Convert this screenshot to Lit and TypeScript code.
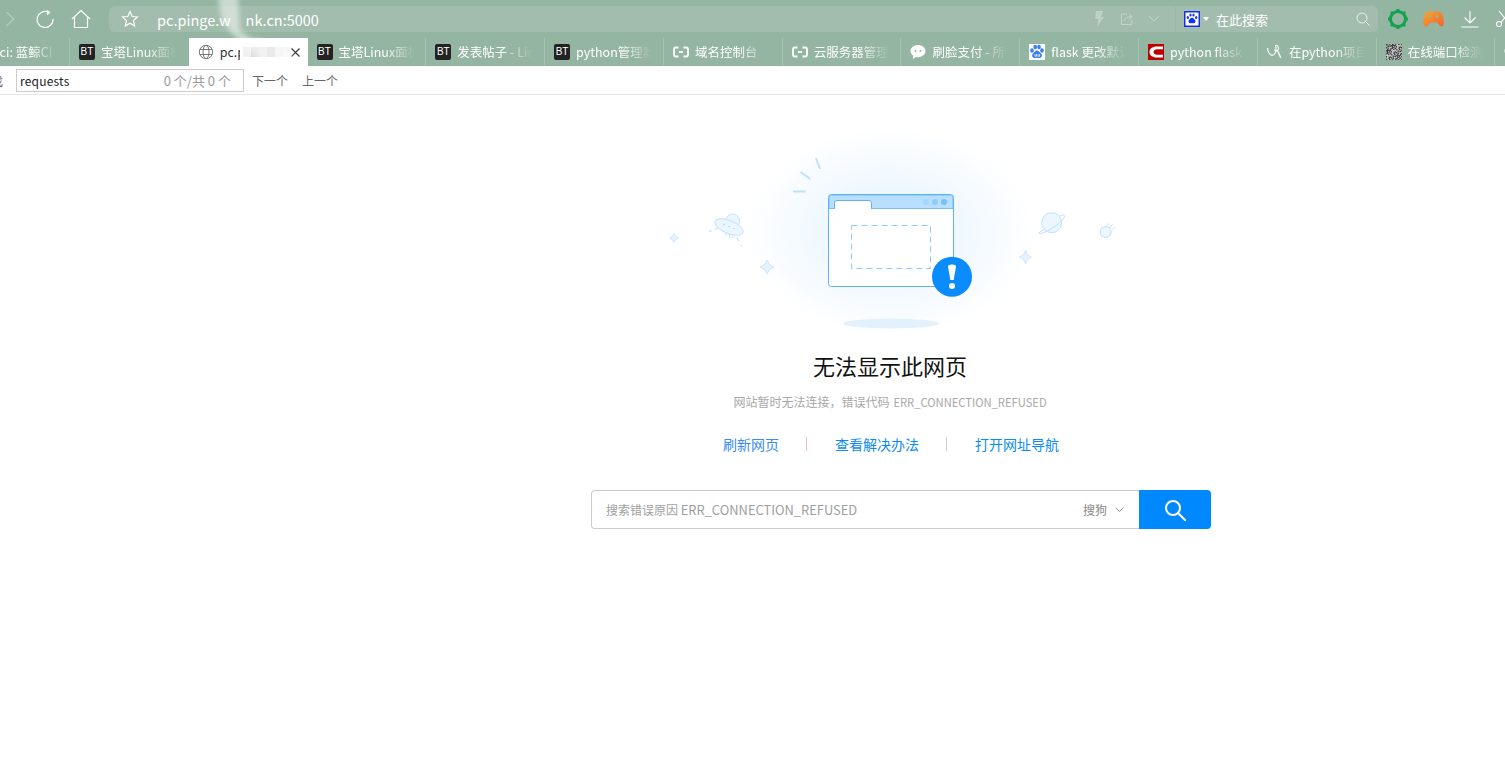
import { LitElement, html, css, svg } from "lit";
import { customElement } from "lit/decorators.js";

const bt = html`<span class="bt">BT</span>`;
const aliyun = html`<svg class="ti" viewBox="0 0 16 16" fill="none" stroke="#fff" stroke-width="1.8"><path d="M5.5 3.5H3Q1 3.5 1 5.5V10.5Q1 12.5 3 12.5H5.5"/><path d="M10.5 3.5H13Q15 3.5 15 5.5V10.5Q15 12.5 13 12.5H10.5"/><path d="M6 8H10"/></svg>`;
const wechat = html`<svg class="ti" viewBox="0 0 16 16"><path fill="#fff" d="M8 1C3.8 1 .5 3.7.5 7c0 1.9 1.1 3.6 2.8 4.7L2.7 15l3.2-2c.7.1 1.4.2 2.1.2 4.2 0 7.5-2.7 7.5-6.1S12.200 1 8 1z"/><circle cx="5.500" cy="7" r="1" fill="#94b5a2"/><circle cx="10.500" cy="7" r="1" fill="#94b5a2"/></svg>`;
const baiduTab = html`<svg class="ti" viewBox="0 0 16 16"><rect width="16" height="16" fill="#fff"/><g fill="#3a7ff0"><ellipse cx="3" cy="6.500" rx="1.800" ry="2.200"/><ellipse cx="6.200" cy="3" rx="1.800" ry="2.300"/><ellipse cx="10" cy="3" rx="1.800" ry="2.300"/><ellipse cx="13" cy="6.500" rx="1.800" ry="2.200"/><path d="M8 6.500c-2 0-2.500 2-4 3-1.500 1.200-1 4.500 1.500 4.500 1 0 1.600-.3 2.500-.3s1.500.3 2.500.3c2.500 0 3-3.300 1.500-4.500-1.500-1-2-3-4-3z"/></g><path d="M6 10v2.300h1.500V10M9 10v2.300h1.500V10" fill="none" stroke="#fff" stroke-width=".7"/></svg>`;
const csdn = html`<svg class="ti" viewBox="0 0 16 16"><rect width="16" height="16" fill="#c00000"/><path fill="#fff" d="M15 2.500H8.500C4.500 2.500 1.500 4.800 1.500 8s3 5.500 7 5.500H15V10.800H9C7 10.800 5.500 9.700 5.500 8S7 5.200 9 5.200H15z"/></svg>`;
const script = html`<svg class="ti" viewBox="0 0 16 16" fill="none" stroke="#fff" stroke-width="1.100"><path d="M.5 4C1 8 3 11.500 5.300 11.300 7.500 11 9 8 9 5 9 2.500 8 1.500 8.700 1.300 10.500 1 12 3 11 6 10 8 8 7 7.500 5.500"/><path d="M10.500 6.500L13.700 13.700" stroke-width="1.400"/></svg>`;
const qrRects: unknown[] = [];
for (let y = 0; y < 16; y++) {
  for (let x = 0; x < 16; x++) {
    const v = (x * 7 + y * 13 + ((x * y) % 5) * 11) % 6;
    const c = ["#3c3c3c", "#777", "#a9a9a9", "#555", "#8e8e8e", "#c4c4c4"][v];
    qrRects.push(svg`<rect x=${x} y=${y} width="1" height="1" fill=${c}></rect>`);
  }
}
const qr = html`<svg class="ti" viewBox="0 0 16 16" shape-rendering="crispEdges">${qrRects}</svg>`;
const globe = html`<svg class="ti" viewBox="0 0 16 16" fill="none" stroke="#777" stroke-width="1"><circle cx="8" cy="8" r="6.700"/><ellipse cx="8" cy="8" rx="3" ry="6.700"/><path d="M1.800 5.500H14.200M1.800 10.500H14.200"/></svg>`;

interface Tab { icon: unknown; text: string; active?: boolean; cut?: boolean }
const tabs: Tab[] = [
  { icon: null, text: "ci: 蓝鲸CI", cut: true },
  { icon: bt, text: "宝塔Linux面板" },
  { icon: globe, text: "pc.p", active: true },
  { icon: bt, text: "宝塔Linux面板" },
  { icon: bt, text: "发表帖子 - Linux" },
  { icon: bt, text: "python管理器" },
  { icon: aliyun, text: "域名控制台" },
  { icon: aliyun, text: "云服务器管理" },
  { icon: wechat, text: "刷脸支付 - 所有" },
  { icon: baiduTab, text: "flask 更改默认" },
  { icon: csdn, text: "python flask" },
  { icon: script, text: "在python项目" },
  { icon: qr, text: "在线端口检测" },
  { icon: wechat, text: "" },
];

@customElement("app-root")
export class AppRoot extends LitElement {
  static styles = css`
    :host { display: block; height: 767px; overflow: hidden; position: relative; background: #fff;
      font-family: "Noto Sans CJK SC", "Open Sans", sans-serif; }
    .toolbar { height: 38px; background: #94b5a2; display: flex; align-items: center; }
    .nav { flex: 0 0 109px; display: flex; align-items: center; }
    .fwd { margin-left: 5px; width: 10px; height: 16px; }
    .reload { margin-left: 20px; width: 20px; height: 20px; }
    .home { margin-left: 16px; width: 20px; height: 20px; }
    .addr { width: 1269px; height: 26px; border-radius: 6px; background: #a2bdad; display: flex; align-items: center; color: #fff; }
    .star { margin-left: 12px; width: 18px; height: 18px; flex: none; }
    .url { margin-left: 18px; font-size: 14.500px; display: flex; white-space: nowrap; }
    .urlgap { width: 15px; }
    .spring { flex: 1; }
    .dim { flex: none; }
    .bolt { width: 10px; height: 16px; margin-right: 16px; }
    .share { width: 14px; height: 14px; margin-right: 14px; }
    .chev { width: 12px; height: 8px; margin-right: 15px; }
    .sep { width: 1px; height: 26px; background: #9db8a8; flex: none; }
    .paw { margin-left: 8px; width: 16px; height: 16px; flex: none; }
    .tri { margin-left: 3px; width: 6px; height: 4px; flex: none; }
    .hint { margin-left: 7px; font-size: 13px; width: 140px; flex: none; }
    .mag { width: 14px; height: 14px; flex: none; margin-right: 8px; }
    .tools { flex: 1; display: flex; align-items: center; min-width: 0; }
    .gear { margin-left: 9px; width: 22px; height: 22px; flex: none; }
    .pad { margin-left: 14px; width: 21px; height: 16px; flex: none; }
    .dl { margin-left: 17px; width: 18px; height: 18px; flex: none; }
    .cut { margin-left: 17px; width: 18px; height: 18px; flex: none; }

    .tabs { height: 28px; background: #94b5a2; display: flex; margin-left: -48.900px; width: 1660px; }
    .tab { flex: 0 0 118.800px; box-sizing: border-box; height: 28px; display: flex; align-items: center; padding-left: 9px;
      border-right: 1px solid #a6c2b2; color: #fff; font-size: 12.500px; overflow: hidden; }
    .tab.cutoff { padding-left: 48.500px; }
    .tab.active { background: #fff; color: #333; border-right: none; }
    .tab.before-active { border-right: none; }
    .label { margin-left: 6px; width: 76px; padding-bottom: 2px; white-space: nowrap; overflow: hidden;
      -webkit-mask-image: linear-gradient(90deg, #000 58%, transparent 100%); mask-image: linear-gradient(90deg, #000 58%, transparent 100%); }
    .active .label { -webkit-mask-image: none; mask-image: none; width: auto; }
    .cutoff .label { margin-left: 0; width: 56px; }
    .ti { width: 16px; height: 16px; flex: none; }
    .bt { width: 16px; height: 16px; flex: none; background: #222; border-radius: 2px; color: #fff; font: 10px/16px "Liberation Sans", sans-serif; text-align: center; }
    .mosaic { display: flex; margin-left: 3px; height: 10px; }
    .mosaic i { display: block; width: 8px; height: 10px; }
    .close { margin-left: auto; margin-right: 8px; width: 9px; height: 9px; flex: none; }

    .find { box-sizing: border-box; display: flex; align-items: center; border-bottom: 1px solid #e6e6e6; font-size: 12px; background: #fff; height: 29px; }
    .findlabel { margin-left: -9px; margin-right: 13px; width: 12px; color: #666; white-space: nowrap; overflow: hidden; flex: none; }
    .box { width: 228px; height: 23px; box-sizing: border-box; border: 1px solid #ccc; display: flex; align-items: center; padding: 0 12px 0 3px; justify-content: space-between; color: #222; letter-spacing: .2px; }
    .count { color: #999; font-size: 13px; letter-spacing: 0; }
    .fbtn { color: #666; margin-left: 8px; }
    .fbtn + .fbtn { margin-left: 14px; }

    main { width: 620px; margin-left: 580px; padding-top: 35px; display: flex; flex-direction: column; align-items: center; }
    .art { width: 460px; height: 210px; display: block; flex: none; }
    h1 { margin: 10px 0 0; font-size: 22px; line-height: 30px; font-weight: 400; color: #111; }
    .sub { margin-top: 13px; font-size: 12px; line-height: 18px; color: #a8a8a8; white-space: nowrap; }
    .sub span { font-size: 11.200px; margin-left: 4px; }
    .links { margin-top: 23px; padding-left: 2px; display: flex; align-items: center; font-size: 14px; line-height: 20px; color: #0a8cf0; white-space: nowrap; }
    .links .first { color: #3a8bf2; }
    .links i { display: block; width: 1px; height: 14px; margin: 0 28px 0 27px; background: #c8d0e8; }
    .links i.pink { background: #f0b8c8; }
    .search { margin-top: 36px; margin-left: 22px; width: 620px; height: 39px; flex: none; display: flex; }
    .field { flex: 1; box-sizing: border-box; border: 1px solid #ccc; border-right: none; border-radius: 4px 0 0 4px; display: flex; align-items: center; padding-left: 14px; font-size: 12px; color: #a0a0a0; }
    .field .en { font-size: 12.900px; }
    .engine { margin-left: auto; color: #888; }
    .echev { width: 9px; height: 6px; margin: 0 15px 0 8px; flex: none; }
    .go { flex: 0 0 72px; background: #0088ff; border-radius: 0 4px 4px 0; display: flex; align-items: center; justify-content: center; }
    .go svg { width: 22px; height: 22px; }

    .smudge { position: absolute; left: 200px; top: 0; width: 110px; height: 66px; pointer-events: none; }
  `;

  render() {
    return html`
      <div class="toolbar">
        <div class="nav">
          <svg class="fwd" viewBox="0 0 10 16" fill="none" stroke="#fff" stroke-opacity=".3" stroke-width="1.200"><path d="M1 1l8 7-8 7"/></svg>
          <svg class="reload" viewBox="0 0 20 20" fill="none" stroke="#fff" stroke-width="1.200"><path d="M13.500 3.300A8 8 0 1 0 18 10"/><path d="M11.500 .8l4 2.500-3.200 3" fill="#fff" stroke="none"/></svg>
          <svg class="home" viewBox="0 0 20 20" fill="none" stroke="#fff" stroke-width="1.200"><path d="M1 10L10 1.500 19 10"/><path d="M3.500 8.500V18.500H16.500V8.500"/></svg>
        </div>
        <div class="addr">
          <svg class="star" viewBox="0 0 18 18" fill="none" stroke="#fff" stroke-width="1.200"><path d="M9 1.500l2.200 5 5.300.5-4 3.600 1.200 5.400L9 13.200l-4.700 2.800 1.200-5.400-4-3.600 5.300-.5z"/></svg>
          <div class="url"><span>pc.pinge.w</span><span class="urlgap"></span><span>nk.cn:5000</span></div>
          <div class="spring"></div>
          <svg class="dim bolt" viewBox="0 0 10 16"><path fill="#fff" fill-opacity=".3" d="M2 0H9L7 6H10L3 16 4.500 8H1z"/></svg>
          <svg class="dim share" viewBox="0 0 14 14" fill="none" stroke="#fff" stroke-opacity=".35" stroke-width="1"><path d="M7 2H1.500V12.500H12V8"/><path d="M4.500 9C5 6 7.500 4.500 11 4.500M9 2l3 2.500L9 7"/></svg>
          <svg class="dim chev" viewBox="0 0 12 8" fill="none" stroke="#fff" stroke-opacity=".35" stroke-width="1"><path d="M1 1l5 5 5-5"/></svg>
          <div class="sep"></div>
          <svg class="paw" viewBox="0 0 16 16"><rect x=".75" y=".75" width="14.500" height="14.500" fill="#fff" stroke="#1230f0" stroke-width="1.500"/><g fill="#1230f0"><ellipse cx="3.800" cy="6.500" rx="1.100" ry="1.500"/><ellipse cx="6.500" cy="4" rx="1.100" ry="1.500"/><ellipse cx="9.500" cy="4" rx="1.100" ry="1.500"/><ellipse cx="12.200" cy="6.500" rx="1.100" ry="1.500"/><path d="M8 6.800c-1.500 0-2 1.500-3 2.300-1 1-.6 3.200 1.200 3.200.7 0 1.100-.3 1.800-.3s1.100.3 1.800.3c1.800 0 2.200-2.200 1.200-3.200-1-.8-1.500-2.300-3-2.300z"/></g></svg>
          <svg class="tri" viewBox="0 0 6 4"><path fill="#fff" d="M0 0H6L3 4z"/></svg>
          <span class="hint">在此搜索</span>
          <svg class="mag" viewBox="0 0 14 14" fill="none" stroke="#fff" stroke-opacity=".75" stroke-width="1"><circle cx="6" cy="6" r="5"/><path d="M9.700 9.700L13.500 13.500"/></svg>
        </div>
        <div class="tools">
          <svg class="gear" viewBox="0 0 22 22" fill="none"><circle cx="11" cy="11" r="7.500" stroke="#14a24e" stroke-width="3"/><g fill="#14a24e"><rect x="9.500" y="1" width="3" height="3"/><rect x="9.500" y="18" width="3" height="3"/><rect x="1" y="9.500" width="3" height="3"/><rect x="18" y="9.500" width="3" height="3"/><rect x="3.500" y="3.500" width="3" height="3"/><rect x="15.500" y="3.500" width="3" height="3"/><rect x="3.500" y="15.500" width="3" height="3"/><rect x="15.500" y="15.500" width="3" height="3"/></g></svg>
          <svg class="pad" viewBox="0 0 21 16"><defs><linearGradient id="pg" x1="0" x2="1" y1="0" y2="1"><stop offset="0" stop-color="#f9a62b"/><stop offset="1" stop-color="#f1632e"/></linearGradient></defs><path fill="url(#pg)" d="M6 0.500H15C18.500 .5 20.500 5 20.800 11c.1 3-1 4.500-2.500 4.500-1.800 0-3-3.500-5-4H8.200c-2 .5-3.200 4-5 4C1.700 15.500.2 14 .2 11 .5 5 2.500.5 6 .5z"/><circle cx="7" cy="5.500" r="1.400" fill="#94b5a2"/><circle cx="14" cy="5.500" r="1.400" fill="#94b5a2"/></svg>
          <svg class="dl" viewBox="0 0 18 18" fill="none" stroke="#fff" stroke-width="1.100"><path d="M9 1V13M3.500 7.500L9 13l5.500-5.500M.5 17H17.500"/></svg>
          <svg class="cut" viewBox="0 0 18 18" fill="none" stroke="#fff" stroke-width="1.100"><circle cx="3" cy="14" r="2.500"/><path d="M5 12.500L14 1M3 1l9 11"/></svg>
        </div>
      </div>
      <div class="tabs">
        ${tabs.map((t, i) => html`
          <div class="tab ${t.active ? "active" : ""} ${t.cut ? "cutoff" : ""} ${tabs[i + 1]?.active ? "before-active" : ""}">
            ${t.icon}
            <span class="label">${t.text}</span>
            ${t.active ? html`
              <div class="mosaic"><i style="background:#f1f1f1"></i><i style="background:#dcdcdc"></i><i style="background:#e3e3e3"></i><i style="background:#d4d4d4"></i><i style="background:#ececec"></i><i style="background:#f4f4f4"></i></div>
              <svg class="close" viewBox="0 0 9 9" stroke="#333" stroke-width="1.100"><path d="M.5.500l8 8M8.500.500l-8 8"/></svg>` : ""}
          </div>`)}
      </div>
      <div class="find">
        <span class="findlabel">找</span>
        <div class="box"><span>requests</span><span class="count">0 个/共 0 个</span></div>
        <span class="fbtn">下一个</span>
        <span class="fbtn">上一个</span>
      </div>
      <main>
        <svg class="art" viewBox="660 130 460 210">
          <defs>
            <radialGradient id="glow"><stop offset="0" stop-color="#dff0ff"/><stop offset=".5" stop-color="#f0f8ff"/><stop offset="1" stop-color="#fff"/></radialGradient>
          </defs>
          <ellipse cx="890" cy="232" rx="145" ry="104" fill="url(#glow)"/>
          <ellipse cx="891" cy="323.500" rx="48" ry="5" fill="#e3f1fd"/>
          <g stroke="#bde0fd" stroke-width="2" fill="none"><path d="M816 158L820 169"/><path d="M800.700 172L810.300 179"/><path d="M793 191.500H805.700"/></g>
          <rect x="828.500" y="194.500" width="125" height="92" rx="3" fill="#fff" stroke="#5cb4ff"/>
          <path d="M829 208.500V197.500Q829 195 831.500 195H950.500Q953 195 953 197.500V208.500Z" fill="#b8dfff" stroke="#5cb4ff" stroke-width=".8"/>
          <path d="M834.500 208.500V203Q834.500 200.500 837 200.500H869Q871.500 200.500 871.500 203V208.500Z" fill="#fff" stroke="#5cb4ff"/>
          <path d="M835 208.500H871" stroke="#fff" stroke-width="1.200"/>
          <circle cx="926" cy="202" r="3" fill="#a5d6ff"/><circle cx="935" cy="202" r="3" fill="#8ccbff"/><circle cx="944" cy="202" r="3" fill="#75c0ff"/>
          <rect x="851.500" y="225.500" width="79" height="43" fill="none" stroke="#8ccbff" stroke-dasharray="6 4"/>
          <circle cx="952" cy="276.700" r="20" fill="#0a8cff"/>
          <path d="M948 266.500Q948 264.500 952 264.500T956 266.500L953.700 280H950.300Z" fill="#fff"/>
          <circle cx="952" cy="286" r="3" fill="#fff"/>
          <g fill="#e6f3ff" stroke="#bfe0ff" stroke-width=".8">
            <path d="M674 233.500Q675 237 678.500 238 675 239 674 242.500 673 239 669.500 238 673 237 674 233.500Z"/>
            <path d="M767 260Q768.500 265.500 774 267 768.500 268.500 767 274 765.500 268.500 760 267 765.500 265.500 767 260Z"/>
            <path d="M1025.500 250.500Q1026.500 255.500 1031.500 257 1026.500 258.500 1025.500 263.500 1024.500 258.500 1019.500 257 1024.500 255.500 1025.500 250.500Z"/>
          </g>
          <g stroke="#bfe0ff" stroke-width=".9" fill="#ecf6ff">
            <circle cx="732.500" cy="221" r="7"/>
            <ellipse cx="729" cy="227" rx="15" ry="6.500" transform="rotate(22 729 227)"/>
            <path d="M726 233v3.500M729.500 234v3.500M733 235.500v3" fill="none"/>
            <path d="M709 231.700L712 230.500M714.500 229.500L718 228M737 237L739 241.500M740.500 244.500L741.700 246.500" fill="none" stroke="#b5dcfb"/>
          </g>
          <circle cx="724" cy="224.500" r=".8" fill="#a5d6ff"/><circle cx="729" cy="226.500" r=".8" fill="#a5d6ff"/><circle cx="734" cy="228.500" r=".8" fill="#a5d6ff"/>
          <g stroke="#bfe0ff" stroke-width="1" fill="#ecf6ff">
            <circle cx="1051.700" cy="222.700" r="10"/>
            <path d="M1044 229.500C1039 232 1038 233.500 1040 233.500 1045 233.500 1064 222 1064.500 216.500 1065 214.500 1062 215 1059.500 216" fill="none"/>
            <circle cx="1105.700" cy="232" r="5.500"/>
            <path d="M1109 228L1113 224M1112 230L1115.500 227M1106 226L1109 223.500" fill="none" stroke-width=".8"/>
          </g>
        </svg>
        <h1>无法显示此网页</h1>
        <div class="sub">网站暂时无法连接，错误代码<span>ERR_CONNECTION_REFUSED</span></div>
        <div class="links">
          <span class="first">刷新网页</span><i class="pink"></i><span>查看解决办法</span><i></i><span>打开网址导航</span>
        </div>
        <div class="search">
          <div class="field">
            <span>搜索错误原因 <span class="en">ERR_CONNECTION_REFUSED</span></span>
            <span class="engine">搜狗</span>
            <svg class="echev" viewBox="0 0 9 6" fill="none" stroke="#999" stroke-width="1"><path d="M.5.500l4 4 4-4"/></svg>
          </div>
          <div class="go"><svg viewBox="0 0 22 22" fill="none" stroke="#fff" stroke-width="2"><circle cx="9" cy="9" r="7"/><path d="M14 14l7 7" stroke-linecap="round"/></svg></div>
        </div>
      </main>
      <svg class="smudge" viewBox="200 0 110 66">
        <defs><filter id="bl"><feGaussianBlur stdDeviation="2.500"/></filter></defs>
        <path filter="url(#bl)" fill="#fff" fill-opacity=".5" d="M218 -4H238L240 30 250 38 280 44 297 60 262 62 244 44 232 34 222 20Z"/>
      </svg>
    `;
  }
}
